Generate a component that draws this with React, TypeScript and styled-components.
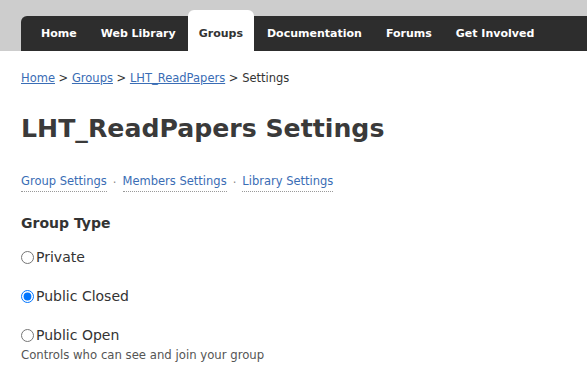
import React, { useState } from 'react';
import styled, { createGlobalStyle } from 'styled-components';

const GlobalStyle = createGlobalStyle`
  body {
    margin: 0;
    background: #fff;
    font-family: 'DejaVu Sans', 'Liberation Sans', sans-serif;
    color: #333;
  }
`;

const navItems = ['Home', 'Web Library', 'Groups', 'Documentation', 'Forums', 'Get Involved'];

const App: React.FC = () => {
  const [groupType, setGroupType] = useState('closed');

  return (
    <>
      <GlobalStyle />
      <Header>
        <Nav>
          {navItems.map((item) => (
            <NavItem key={item} active={item === 'Groups'}>
              {item}
            </NavItem>
          ))}
        </Nav>
      </Header>
      <Content>
        <Breadcrumb>
          <Crumb href="#">Home</Crumb> &gt; <Crumb href="#">Groups</Crumb> &gt;{' '}
          <Crumb href="#">LHT_ReadPapers</Crumb> &gt; Settings
        </Breadcrumb>
        <Title>LHT_ReadPapers Settings</Title>
        <SubNav>
          <SubLink href="#">Group Settings</SubLink>
          <Dot>·</Dot>
          <SubLink href="#">Members Settings</SubLink>
          <Dot>·</Dot>
          <SubLink href="#">Library Settings</SubLink>
        </SubNav>
        <SectionTitle>Group Type</SectionTitle>
        <RadioRow first>
          <Radio
            type="radio"
            name="type"
            checked={groupType === 'private'}
            onChange={() => setGroupType('private')}
          />
          Private
        </RadioRow>
        <RadioRow>
          <Radio
            type="radio"
            name="type"
            checked={groupType === 'closed'}
            onChange={() => setGroupType('closed')}
          />
          Public Closed
        </RadioRow>
        <RadioRow>
          <Radio
            type="radio"
            name="type"
            checked={groupType === 'open'}
            onChange={() => setGroupType('open')}
          />
          Public Open
        </RadioRow>
        <Help>Controls who can see and join your group</Help>
      </Content>
    </>
  );
};

export default App;

const Header = styled.div`
  background: #cdcdcd;
  padding: 16px 0 0 21px;
`;

const Nav = styled.ul`
  display: flex;
  align-items: flex-end;
  margin: 0;
  padding: 0 0 0 8px;
  list-style: none;
  background: #2d2d2d;
  border-top-left-radius: 6px;
  height: 35px;
`;

const NavItem = styled.li<{ active?: boolean }>`
  font-size: 11px;
  font-weight: bold;
  padding: 0 ${({ active }) => (active ? '11px' : '12px')};
  margin-right: ${({ active }) => (active ? '1px' : '0')};
  height: ${({ active }) => (active ? '41px' : '35px')};
  line-height: ${({ active }) => (active ? '47px' : '35px')};
  box-sizing: border-box;
  margin-top: ${({ active }) => (active ? '-6px' : '0')};
  color: ${({ active }) => (active ? '#333' : '#fff')};
  background: ${({ active }) => (active ? '#fff' : 'transparent')};
  border-radius: 6px 6px 0 0;
  white-space: nowrap;
`;

const Content = styled.div`
  padding: 0 21px;
`;

const Breadcrumb = styled.div`
  font-size: 11.5px;
  padding-top: 20px;
  color: #333;
`;

const Crumb = styled.a`
  color: #3a6db5;
`;

const Title = styled.h1`
  font-size: 25.2px;
  font-weight: bold;
  color: #3a3a3a;
  margin: 28px 0 0;
  line-height: 31px;
`;

const SubNav = styled.div`
  display: flex;
  align-items: center;
  gap: 6px;
  font-size: 11.5px;
  margin-top: 30px;
`;

const SubLink = styled.a`
  color: #3a6db5;
  text-decoration: none;
  border-bottom: 1px dotted #999;
  padding-bottom: 3px;
`;

const Dot = styled.span`
  color: #888;
`;

const SectionTitle = styled.div`
  font-size: 14px;
  font-weight: bold;
  margin-top: 23px;
  color: #333;
`;

const RadioRow = styled.label<{ first?: boolean }>`
  display: flex;
  align-items: center;
  font-size: 14px;
  color: #333;
  margin-top: ${({ first }) => (first ? '18px' : '23px')};
`;

const Radio = styled.input`
  margin: 0 2px 0 0;
  width: 13px;
  height: 13px;
`;

const Help = styled.div`
  font-size: 11.7px;
  color: #555;
  margin-top: 5px;
`;
